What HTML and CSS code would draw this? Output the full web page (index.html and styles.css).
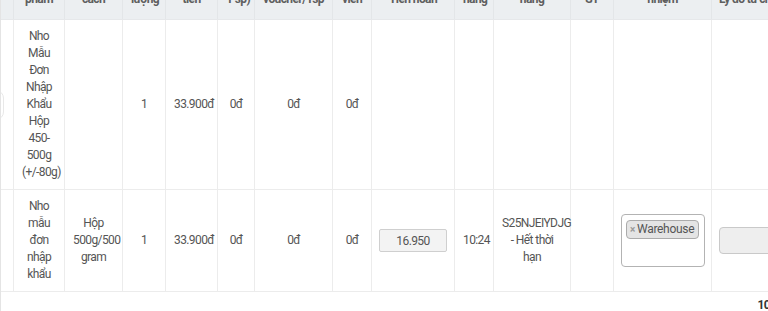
FILE: index.html
```html
<!DOCTYPE html>
<html lang="vi">
<head>
<meta charset="utf-8">
<title>Đơn hoàn hàng</title>
<link rel="stylesheet" href="styles.css">
</head>
<body>
<div class="panel">
  <table class="orders">
    <colgroup>
      <col class="w-sel"><col class="w-name"><col class="w-spec"><col class="w-qty"><col class="w-price">
      <col class="w-d1"><col class="w-d2"><col class="w-d3"><col class="w-refund"><col class="w-time">
      <col class="w-code"><col class="w-st"><col class="w-dept"><col class="w-reason">
    </colgroup>
    <thead>
      <tr>
        <th></th>
        <th>Tên<br>sản<br>phẩm</th>
        <th>Quy<br>cách</th>
        <th>Số<br>lượng</th>
        <th>Thành<br>tiền</th>
        <th>Giảm<br>giá (trên<br><span class="nw">1 sp)</span></th>
        <th>Giảm giá<br><span class="nw">voucher/1sp</span></th>
        <th>Nhân<br>viên</th>
        <th>Tiền hoàn</th>
        <th>Hoàn<br>hàng</th>
        <th>Mã đơn<br>hàng</th>
        <th>ST</th>
        <th>Bộ phận<br>chịu trách<br>nhiệm</th>
        <th class="left">Lý do từ chối</th>
      </tr>
    </thead>
    <tbody>
      <tr>
        <td class="thumb-cell"><span class="thumb"></span></td>
        <td>Nho Mẫu Đơn Nhập Khẩu Hộp 450-500g <span class="nw">(+/-80g)</span></td>
        <td></td>
        <td>1</td>
        <td>33.900đ</td>
        <td>0đ</td>
        <td>0đ</td>
        <td>0đ</td>
        <td></td>
        <td></td>
        <td></td>
        <td></td>
        <td></td>
        <td></td>
      </tr>
      <tr>
        <td></td>
        <td>Nho mẫu đơn nhập khẩu</td>
        <td>Hộp <span class="nw">500g/500</span> gram</td>
        <td>1</td>
        <td>33.900đ</td>
        <td>0đ</td>
        <td>0đ</td>
        <td>0đ</td>
        <td><input class="amount" type="text" value="16.950" disabled></td>
        <td>10:24</td>
        <td><span class="nw">S25NJEIYDJG</span> - Hết thời hạn</td>
        <td></td>
        <td>
          <div class="multi">
            <span class="tag"><span class="tag-x">×</span>Warehouse</span>
          </div>
        </td>
        <td class="left"><input class="reason" type="text"></td>
      </tr>
    </tbody>
    <tfoot>
      <tr>
        <td colspan="13"></td>
        <td class="total">100.000đ</td>
      </tr>
    </tfoot>
  </table>
</div>
</body>
</html>
```

FILE: styles.css
```css
html, body {
  margin: 0;
  padding: 0;
  background: #fff;
  overflow: hidden;
}

body {
  font-family: Roboto, "Noto Sans", sans-serif;
  font-size: 12px;
  line-height: 17px;
  color: #555;
  letter-spacing: -0.6px;
}

.panel {
  height: 311px;
  overflow: hidden;
  border-left: 1px solid #e4e4e4;
}

.orders {
  width: 878px;
  table-layout: fixed;
  border-collapse: collapse;
  margin-left: -28px;
  margin-top: -72px;
}

.w-sel { width: 40px; }
.w-name { width: 51px; }
.w-spec { width: 58px; }
.w-qty { width: 43px; }
.w-price { width: 52px; }
.w-d1 { width: 37px; }
.w-d2 { width: 78px; }
.w-d3 { width: 39px; }
.w-refund { width: 83px; }
.w-time { width: 39px; }
.w-code { width: 77px; }
.w-st { width: 43px; }
.w-dept { width: 98px; }
.w-reason { width: 140px; }

.orders th {
  height: 91px;
  box-sizing: border-box;
  padding: 8px 8px 11px;
  background: #eceff1;
  color: #5f5f5f;
  font-weight: 700;
  text-align: center;
  vertical-align: bottom;
  border: 1px solid #e3e6e8;
  border-bottom-color: #e6e8ea;
}

.orders td {
  padding: 8px;
  text-align: center;
  vertical-align: middle;
  border: 1px solid #ececec;
}

.orders th.left,
.orders td.left {
  text-align: left;
  padding-left: 7px;
}

.nw {
  white-space: nowrap;
}

.thumb-cell {
  text-align: right;
}

.thumb {
  display: inline-block;
  width: 20px;
  height: 28px;
  margin-right: 1px;
  border: 1px solid #e8e8e8;
  border-radius: 8px;
  vertical-align: middle;
}

.amount {
  display: block;
  box-sizing: border-box;
  width: 68px;
  height: 23px;
  margin: 0 auto 0 -1px;
  padding: 0 4px;
  border: 1px solid #cfcfcf;
  border-radius: 2px;
  background: #f3f3f3;
  color: #555;
  font: inherit;
  letter-spacing: inherit;
  text-align: center;
  opacity: 1;
}

.multi {
  box-sizing: border-box;
  width: 84px;
  height: 53px;
  margin-left: -1px;
  padding: 5px 4px;
  border: 1px solid #b3b3b3;
  border-radius: 4px;
  text-align: left;
  background: #fff;
}

.tag {
  display: inline-block;
  box-sizing: border-box;
  height: 19px;
  padding: 0 4px 0 3px;
  line-height: 17px;
  border: 1px solid #ababab;
  border-radius: 4px;
  background: #e4e4e4;
  color: #555;
  font-size: 12px;
  letter-spacing: -0.3px;
}

.tag-x {
  color: #999;
  font-weight: 700;
  font-size: 10px;
  margin-right: 2px;
}

.reason {
  display: block;
  box-sizing: border-box;
  width: 112px;
  height: 27px;
  border: 1px solid #c9c9c9;
  border-radius: 4px;
  background: #eeeeee;
  font: inherit;
}

.orders tfoot td {
  border: none;
  padding: 5px 8px;
}

.orders tfoot td.total {
  text-align: left;
  padding-left: 46px;
  color: #333;
  font-weight: 700;
}
```
